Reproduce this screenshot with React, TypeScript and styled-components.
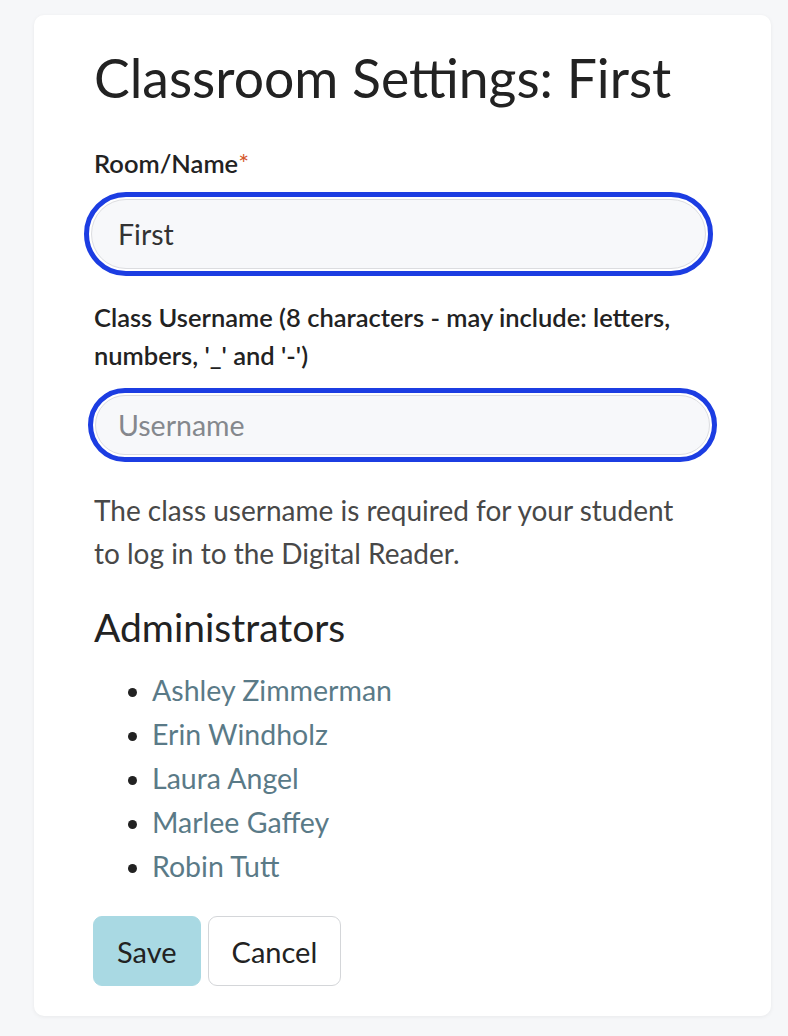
import React from "react";
import styled, { createGlobalStyle } from "styled-components";

const Global = createGlobalStyle`
  html, body { margin: 0; padding: 0; background: #f6f7f9; }
  body { font-family: Lato, "Open Sans", sans-serif; color: #222; }
  * { box-sizing: border-box; }
`;

const Page = styled.div`
  padding: 15px 17px 18px 34px;
`;

const Card = styled.div`
  width: 737px;
  background: #fff;
  border-radius: 10px;
  box-shadow: 0 1px 4px rgba(0, 0, 0, 0.06);
  padding: 30px 50px 30px 50px;
  display: flex;
  flex-direction: column;
  align-items: flex-start;
`;

const Title = styled.h1`
  margin: 0 0 0 10px;
  font-size: 53.5px;
  font-weight: 400;
  line-height: 64px;
  color: #222;
`;

const Label = styled.label<{ $gap: number }>`
  display: block;
  margin: ${(p) => p.$gap}px 0 0 10px;
  font-size: 25.5px;
  font-weight: 600;
  line-height: 37px;
  color: #222;
`;

const WideLabel = styled(Label)`
  line-height: 38px;
  width: 627px;
`;

const Req = styled.span`
  color: #d5582c;
  font-weight: 400;
`;

const Field = styled.div<{ $shift: number; $height: number; $gap: number }>`
  margin: ${(p) => p.$gap}px 0 0 ${(p) => p.$shift}px;
  width: 629px;
  height: ${(p) => p.$height}px;
  border: 5px solid #1c3de2;
  border-radius: 44px;
  padding: 2px;
  display: flex;
`;

const Input = styled.input<{ $pad: number }>`
  flex: 1;
  min-width: 0;
  border: 1px solid #dcdde0;
  border-radius: 36px;
  background: #f7f8fa;
  font-family: inherit;
  font-size: 28.5px;
  color: #333;
  padding: 0 0 0 ${(p) => p.$pad}px;
  outline: none;
  &::placeholder { color: #85888d; }
`;

const Help = styled.p`
  margin: 27px 0 0 10px;
  font-size: 28px;
  line-height: 43px;
  color: #484848;
  width: 600px;
`;

const SubTitle = styled.h2`
  margin: 28px 0 0 10px;
  font-size: 39px;
  font-weight: 400;
  line-height: 48px;
  color: #222;
`;

const List = styled.ul`
  margin: 17px 0 0 10px;
  padding-left: 58px;
  list-style: disc;
`;

const Item = styled.li`
  font-size: 28.5px;
  line-height: 44px;
  color: #222;
  &::marker { font-size: 26px; }
`;

const NameLink = styled.a`
  color: #5a7a87;
  text-decoration: none;
`;

const Actions = styled.div`
  margin: 28px 0 0 9px;
  display: flex;
  gap: 7px;
`;

const Button = styled.button<{ $primary?: boolean }>`
  height: 70px;
  padding: 0 23px;
  border-radius: 9px;
  font-family: inherit;
  font-size: 29px;
  color: #222;
  background: ${(p) => (p.$primary ? "#a9d9e3" : "#fff")};
  border: 1px solid ${(p) => (p.$primary ? "#a9d9e3" : "#d4d6d9")};
  cursor: pointer;
`;

const admins = ["Ashley Zimmerman", "Erin Windholz", "Laura Angel", "Marlee Gaffey", "Robin Tutt"];

export default function App() {
  return (
    <Page>
      <Global />
      <Card>
        <Title>Classroom Settings: First</Title>
        <Label $gap={36}>
          Room/Name<Req>*</Req>
        </Label>
        <Field $shift={0} $height={84} $gap={10}>
          <Input $pad={26} defaultValue="First" />
        </Field>
        <WideLabel $gap={22}>
          Class Username (8 characters - may include: letters, numbers, '_' and '-')
        </WideLabel>
        <Field $shift={4} $height={74} $gap={14}>
          <Input $pad={22} placeholder="Username" />
        </Field>
        <Help>The class username is required for your student to log in to the Digital Reader.</Help>
        <SubTitle>Administrators</SubTitle>
        <List>
          {admins.map((n) => (
            <Item key={n}>
              <NameLink href="#">{n}</NameLink>
            </Item>
          ))}
        </List>
        <Actions>
          <Button $primary>Save</Button>
          <Button>Cancel</Button>
        </Actions>
      </Card>
    </Page>
  );
}
